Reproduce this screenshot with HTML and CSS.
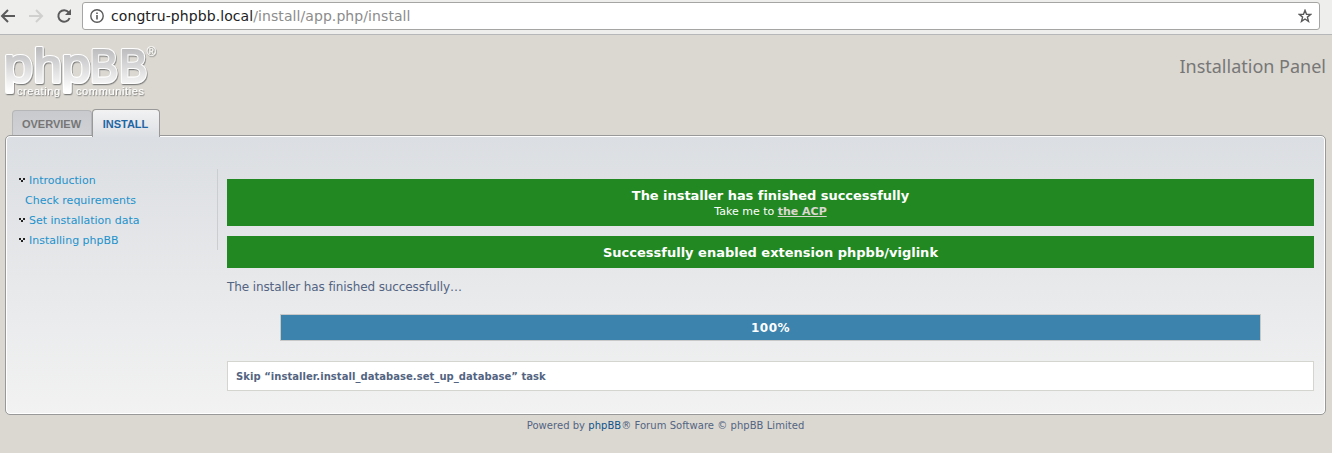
FILE: index.html
```html
<!DOCTYPE html>
<html lang="en">
<head>
<meta charset="utf-8">
<title>Installation Panel</title>
<link rel="stylesheet" href="styles.css">
</head>
<body>
<div class="browser">
  <svg class="nav" width="82" height="34" viewBox="0 0 82 34" fill="none" stroke-width="2">
    <path d="M15 16H2M8 10L2 16L8 22" stroke="#5a5a5a"/>
    <path d="M29 16H42M36 10L42 16L36 22" stroke="#d0d0cf"/>
    <path d="M68.7 12.3A5.8 5.8 0 1 0 69.6 18" stroke="#5a5a5a"/>
    <path d="M71 9V15H65Z" fill="#5a5a5a"/>
  </svg>
  <div class="address">
    <svg class="info" width="14" height="14" viewBox="0 0 14 14"><circle cx="7" cy="7" r="6.2" fill="none" stroke="#5a5a5a" stroke-width="1.4"/><path d="M6.2 6h1.6v4.5H6.2zM6.2 3.4h1.6V5H6.2z" fill="#5a5a5a"/></svg>
    <span class="url"><span class="host">congtru-phpbb.local</span>/install/app.php/install</span>
    <svg class="star" width="14" height="14" viewBox="0 0 14 14"><path d="M7 1.3L8.5 5.2L12.7 5.4L9.4 8.1L10.5 12.4L7 10L3.5 12.4L4.6 8.1L1.3 5.4L5.5 5.2Z" fill="none" stroke="#5a5a5a" stroke-width="1.4"/></svg>
  </div>
</div>
<header class="header">
  <svg class="logo" width="160" height="66" viewBox="0 0 160 66">
    <defs>
      <linearGradient id="silver" gradientUnits="userSpaceOnUse" x1="0" y1="12" x2="0" y2="56"><stop offset="0" stop-color="#b9b9bb"/><stop offset=".8" stop-color="#f2f2f3"/><stop offset="1" stop-color="#fff"/></linearGradient>
      <filter id="drop" x="-10%" y="-10%" width="120%" height="130%"><feDropShadow dx=".7" dy="1.2" stdDeviation=".7" flood-color="#777" flood-opacity=".9"/></filter>
      <g id="word"><text x="3.8" y="46.5" font-size="49" textLength="29" lengthAdjust="spacingAndGlyphs">p</text><text x="33.4" y="46.5" font-size="46.5" textLength="28.5" lengthAdjust="spacingAndGlyphs">h</text><text x="61.6" y="46.5" font-size="49" textLength="29" lengthAdjust="spacingAndGlyphs">p</text><text x="90" y="46.5" font-size="46" textLength="28" lengthAdjust="spacingAndGlyphs">B</text><text x="119.2" y="46.5" font-size="46" textLength="28" lengthAdjust="spacingAndGlyphs">B</text></g>
    </defs>
    <g filter="url(#drop)">
      <use href="#word" class="logo-edge"/>
      <use href="#word" class="logo-face"/>
    </g>
    <g filter="url(#drop)" class="logo-small">
      <text x="17" y="60" textLength="43">creating</text>
      <text x="76" y="60" textLength="68">communities</text>
      <text x="146.5" y="21" font-size="13">®</text>
    </g>
  </svg>
  <h1 class="title">Installation Panel</h1>
</header>
<nav class="tabs"><a class="tab">OVERVIEW</a><a class="tab active">INSTALL</a></nav>
<div class="panel">
  <ul class="menu">
    <li><svg width="6" height="4" viewBox="0 0 6 4"><path d="M0 0h2v2H0zM4 0h2v2H4zM2 2h2v2H2z"/></svg>Introduction</li>
    <li class="plain">Check requirements</li>
    <li><svg width="6" height="4" viewBox="0 0 6 4"><path d="M0 0h2v2H0zM4 0h2v2H4zM2 2h2v2H2z"/></svg>Set installation data</li>
    <li><svg width="6" height="4" viewBox="0 0 6 4"><path d="M0 0h2v2H0zM4 0h2v2H4zM2 2h2v2H2z"/></svg>Installing phpBB</li>
  </ul>
  <main class="main">
    <div class="success first"><strong>The installer has finished successfully</strong><p>Take me to <a>the ACP</a></p></div>
    <div class="success second"><strong>Successfully enabled extension phpbb/viglink</strong></div>
    <p class="status">The installer has finished successfully…</p>
    <div class="progress">100%</div>
    <div class="log">Skip “installer.install_database.set_up_database” task</div>
  </main>
</div>
<footer class="footer">Powered by <a>phpBB</a>® Forum Software © phpBB Limited</footer>
</body>
</html>
```
FILE: styles.css
```css
* { box-sizing: border-box; }
body { margin: 0; height: 453px; overflow: hidden; background: #dbd8d1; color: #536482; font-family: "DejaVu Sans", sans-serif; }
p, h1, ul { margin: 0; padding: 0; }
.browser { display: flex; height: 35px; padding-top: 2px; background: #eeeeed; border-bottom: 1px solid #b6b7b9; }
.nav { margin-top: -2px; flex: none; }
.address { display: flex; align-items: center; width: 1238px; height: 28px; padding: 0 7px; background: #fff; border: 1px solid #a5a5a3; border-radius: 3px; }
.url { margin-left: 7px; flex: 1; font: 14px/26px "DejaVu Sans", sans-serif; letter-spacing: 0.08px; color: #8c8c8c; white-space: nowrap; }
.host { color: #222; }
.header { display: flex; justify-content: space-between; height: 74px; padding-right: 6px; }
.logo { flex: none; font-family: "Liberation Sans", sans-serif; }
.logo-edge { fill: #fff; stroke: #fff; stroke-width: 4px; stroke-linejoin: round; }
.logo-face { fill: url(#silver); stroke: url(#silver); stroke-width: 1.8px; stroke-linejoin: round; }
.logo-small { fill: #fff; font-size: 11px; }
.title { margin-top: 18px; font: 18px/26px "Noto Sans", sans-serif; color: #777; }
.tabs { display: flex; align-items: flex-end; height: 28px; padding-left: 12px; margin-bottom: -2px; position: relative; z-index: 1; }
.tab { height: 25px; width: 80px; margin-bottom: 2px; padding-right: 1px; border: 1px solid #b5b6b8; border-bottom: 0; border-radius: 4px 4px 0 0; background: linear-gradient(#c9cace, #cfd1d5); color: #767676; font: bold 11px/26px "Liberation Sans", sans-serif; text-align: center; }
.tab.active { width: 68px; height: 28px; margin-bottom: 0; border-color: #999; background: linear-gradient(#f2f2f3, #dcdfe3); color: #1f66a5; line-height: 29px; }
.panel { display: flex; height: 280px; margin: 0 6px 0 5px; border: 1px solid #999; border-radius: 5px; box-shadow: inset 0 0 0 1px #fff; background: linear-gradient(#dbdee2, #f2f2f2); }
.menu { list-style: none; width: 212px; height: 81px; margin-top: 33px; padding: 2px 0 0 13px; border-right: 1px solid #cbcdd0; font-size: 11px; line-height: 20px; color: #1e92cc; }
.menu li { display: flex; align-items: center; height: 20px; white-space: nowrap; }
.menu svg { margin-right: 4px; margin-top: -2px; fill: #222; }
.menu .plain { padding-left: 6px; }
.main { flex: 1; margin: 43px 11px 0 9px; }
.success { background: #228822; color: #fff; text-align: center; margin-bottom: 10px; }
.success strong { display: block; font-size: 13px; line-height: 16px; }
.success p { font-size: 11px; line-height: 15px; }
.success a { color: #dbd7d1; font-weight: bold; text-decoration: underline; }
.first { height: 47px; padding-top: 9px; }
.first strong { letter-spacing: -0.05px; }
.second { height: 32px; padding-top: 9px; }
.status { height: 36px; font-size: 12px; line-height: 18px; letter-spacing: -0.1px; }
.progress { width: 981px; height: 27px; margin: 0 auto 20px; border: 1px solid #c8c8c8; background: #3c83ad; color: #fff; font-weight: bold; font-size: 12px; line-height: 26px; letter-spacing: 0.5px; text-align: center; }
.log { height: 30px; padding-left: 8px; border: 1px solid #d5d5cf; background: #fff; font-weight: bold; font-size: 10px; line-height: 29px; letter-spacing: 0.045px; }
.footer { padding-right: 1px; font-size: 10px; line-height: 22px; letter-spacing: 0.04px; text-align: center; }
.footer a { color: #105289; }
```
